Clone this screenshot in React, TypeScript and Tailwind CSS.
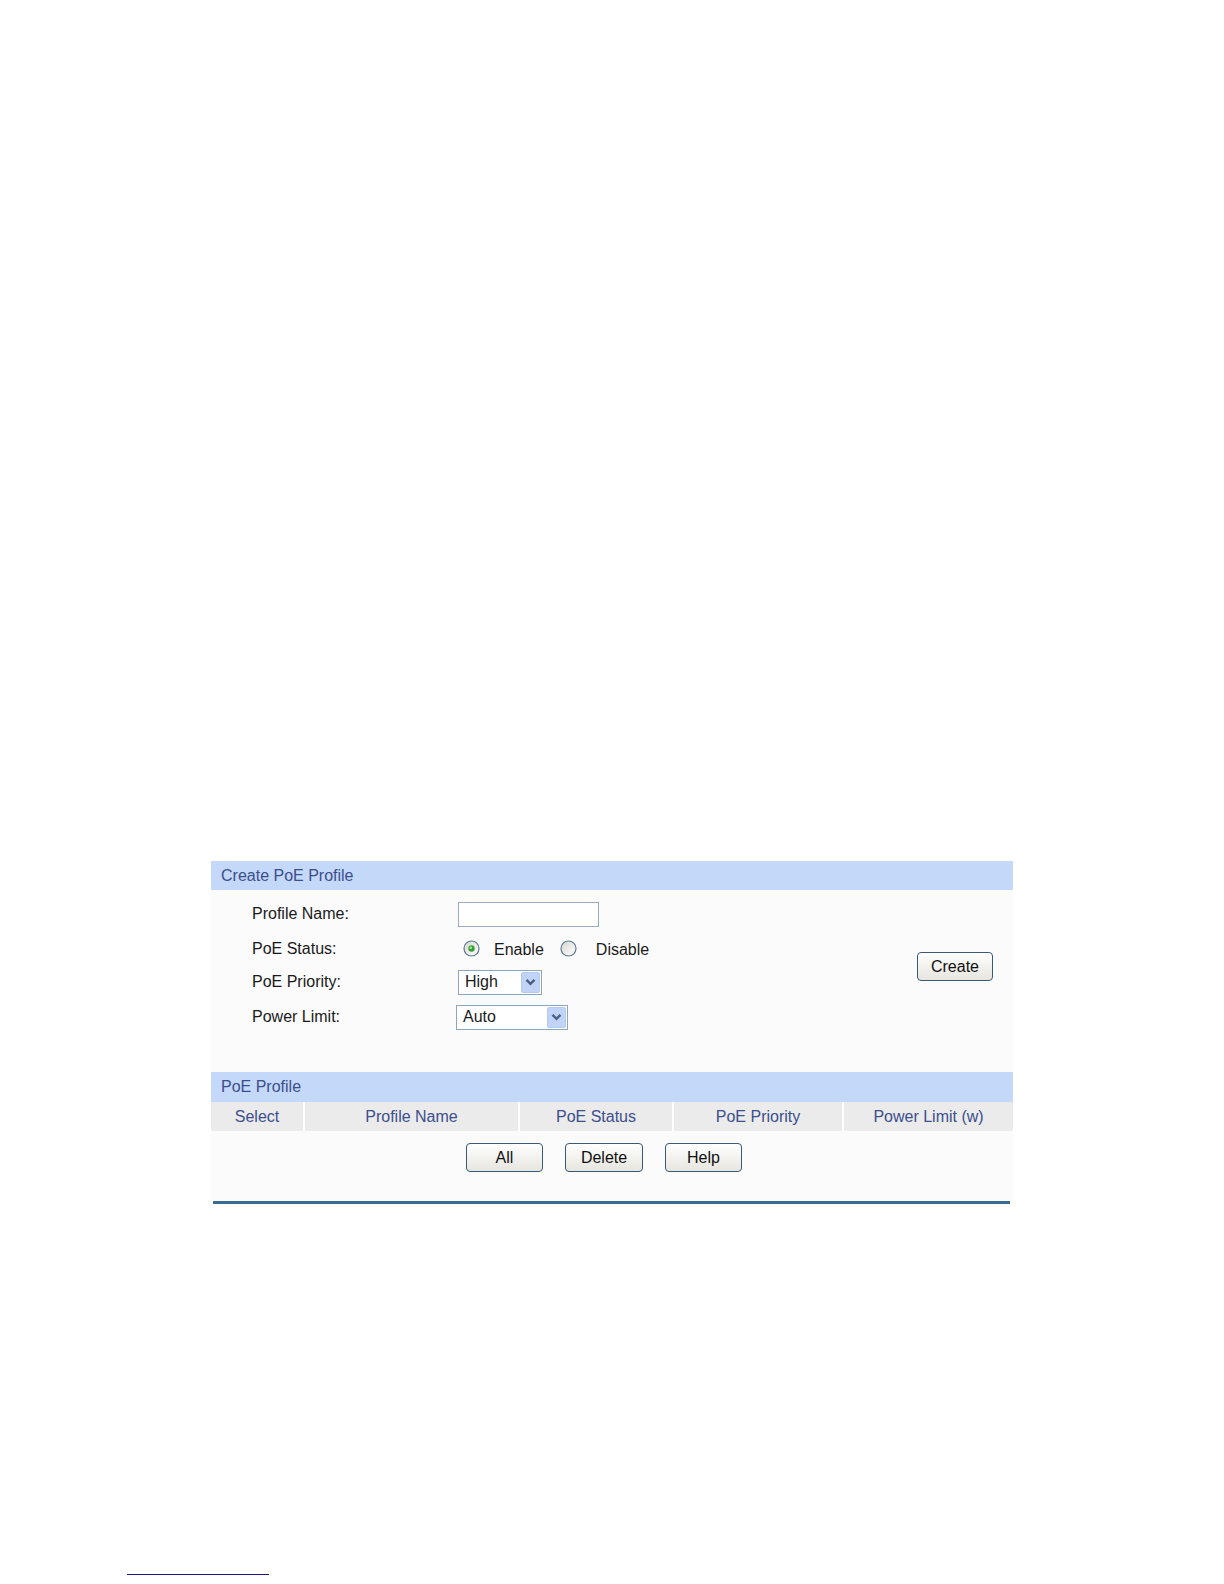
import type { ReactNode } from "react";

const COLUMNS = [
  { label: "Select", className: "w-[92px]" },
  { label: "Profile Name", className: "w-[215px] border-l-2 border-white" },
  { label: "PoE Status", className: "w-[154px] border-l-2 border-white" },
  { label: "PoE Priority", className: "w-[170px] border-l-2 border-white" },
  { label: "Power Limit (w)", className: "w-[171px] border-l-2 border-white" },
];

export default function App() {
  return (
    <div className="min-h-[1584px] bg-white font-['Liberation_Sans',Arial,sans-serif] text-[16px] text-[#1a1a1a]">
      <div className="pl-[211px] pt-[861px]">
        <div className="w-[802px]">
          <SectionTitle className="h-[29px]">Create PoE Profile</SectionTitle>

          <div className="flex items-center bg-[#fbfbfb] pt-[7px] pr-[20px] pb-[36px]">
            <div className="flex-1 pl-[41px]">
              <FormRow label="Profile Name:" className="h-[34px]">
                <div className="h-[25px] w-[141px] border border-[#9aabc2] bg-white" />
              </FormRow>
              <FormRow label="PoE Status:" className="h-[35px]">
                <div className="ml-[5px] flex items-center">
                  <Radio checked />
                  <span className="ml-[14px] mt-[3px]">Enable</span>
                  <span className="ml-[16px]">
                    <Radio />
                  </span>
                  <span className="ml-[19px] mt-[3px]">Disable</span>
                </div>
              </FormRow>
              <FormRow label="PoE Priority:" className="h-[32px]">
                <Select value="High" className="w-[84px]" />
              </FormRow>
              <FormRow label="Power Limit:" className="h-[38px]">
                <Select value="Auto" className="-ml-[2px] w-[112px]" />
              </FormRow>
            </div>
            <Button className="w-[76px]">Create</Button>
          </div>

          <SectionTitle className="h-[30px]">PoE Profile</SectionTitle>

          <div className="flex h-[29px] bg-[#ebebeb] text-[#3b4f8e]">
            {COLUMNS.map((col) => (
              <div key={col.label} className={`flex items-center justify-center ${col.className}`}>
                {col.label}
              </div>
            ))}
          </div>

          <div className="flex gap-[22px] bg-[#fbfbfb] pt-[12px] pb-[29px] pl-[255px]">
            <Button className="w-[77px]">All</Button>
            <Button className="w-[78px]">Delete</Button>
            <Button className="w-[77px]">Help</Button>
          </div>

          <div className="ml-[2px] h-[3px] w-[797px] bg-[#3a6a90]" />
        </div>
      </div>

      <div className="mt-[370px] ml-[127px] h-px w-[142px] bg-[#1c1c86]" />
    </div>
  );
}

function SectionTitle({ children, className }: { children: ReactNode; className?: string }) {
  return (
    <div className={`flex items-center bg-[#c4d8f9] pl-[10px] text-[#3b4e8c] ${className ?? ""}`}>
      {children}
    </div>
  );
}

function FormRow({ label, className, children }: { label: string; className?: string; children: ReactNode }) {
  return (
    <div className={`flex items-center ${className ?? ""}`}>
      <span className="w-[206px] shrink-0">{label}</span>
      {children}
    </div>
  );
}

function Radio({ checked = false }: { checked?: boolean }) {
  const id = checked ? "rg-on" : "rg-off";
  return (
    <svg width="17" height="17" viewBox="0 0 17 17" className="block">
      <defs>
        <linearGradient id={id} x1="0" y1="0" x2="1" y2="1">
          <stop offset="0" stopColor="#d6d6cf" />
          <stop offset="1" stopColor="#ffffff" />
        </linearGradient>
      </defs>
      <circle cx="8.5" cy="8.5" r="7.5" fill={`url(#${id})`} stroke="#5f7898" strokeWidth="1.2" />
      {checked && (
        <>
          <circle cx="8.5" cy="8.5" r="3.2" fill="#34a034" />
          <circle cx="7.8" cy="7.8" r="1.3" fill="#a8e6a8" />
        </>
      )}
    </svg>
  );
}

function Select({ value, className }: { value: string; className?: string }) {
  return (
    <div className={`flex h-[25px] items-center border border-[#8fa4bf] bg-white ${className ?? ""}`}>
      <span className="flex-1 pl-[6px]">{value}</span>
      <span className="mr-px flex h-[21px] w-[19px] items-center justify-center rounded-[2px] border border-[#b6cbf2] bg-[#c1d4f8]">
        <svg width="11" height="8" viewBox="0 0 11 8">
          <path d="M1.5 1.8 L5.5 5.8 L9.5 1.8" fill="none" stroke="#4a5f86" strokeWidth="2.4" />
        </svg>
      </span>
    </div>
  );
}

function Button({ children, className }: { children: ReactNode; className?: string }) {
  return (
    <button
      type="button"
      className={`flex h-[29px] items-center justify-center rounded-[4px] border border-[#3b5878] bg-gradient-to-b from-white to-[#e6e5de] text-[16px] text-[#111] ${className ?? ""}`}
    >
      {children}
    </button>
  );
}
